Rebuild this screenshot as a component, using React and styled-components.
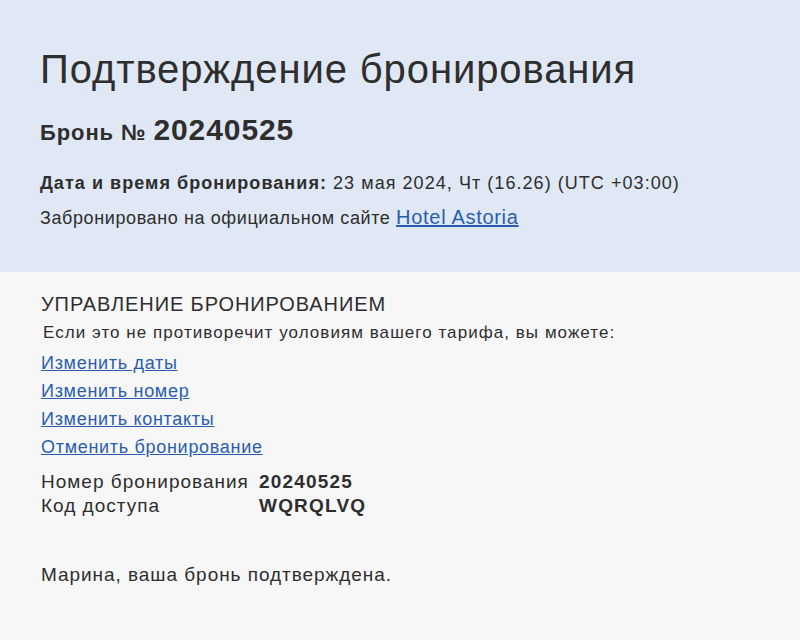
import React from "react";
import styled, { createGlobalStyle } from "styled-components";

const GlobalStyle = createGlobalStyle`
  html, body {
    margin: 0;
    padding: 0;
    background: #f7f7f8;
  }
  body {
    font-family: "Liberation Sans", Arial, sans-serif;
    color: #2e2e2e;
  }
`;

const Page = styled.div`
  width: 800px;
  min-height: 640px;
  background: #f7f7f8;
`;

const Header = styled.header`
  background: #dfe8f4;
  padding: 41px 40px 0;
  height: 272px;
  box-sizing: border-box;
`;

const Title = styled.h1`
  margin: 0;
  font-size: 40px;
  font-weight: normal;
  line-height: 56px;
  letter-spacing: 0.9px;
`;

const BookingNo = styled.h2`
  margin: 17px 0 0;
  font-size: 22px;
  font-weight: bold;
  line-height: 32px;
  letter-spacing: 0.9px;

  & > span {
    font-size: 30px;
  }
`;

const InfoLine = styled.p`
  margin: ${({ $first }) => ($first ? "21px" : "8px")} 0 0;
  font-size: 18px;
  line-height: 26px;
  letter-spacing: ${({ $first }) => ($first ? "1.05px" : "0.6px")};
`;

const Link = styled.a`
  color: #2a5db0;
  text-decoration: underline;
  font-size: ${({ $big }) => ($big ? "20px" : "18px")};
  letter-spacing: 0.7px;
`;

const Body = styled.main`
  padding: 19px 41px 40px;
`;

const SectionTitle = styled.h3`
  margin: 0;
  font-size: 20px;
  font-weight: normal;
  line-height: 26px;
  letter-spacing: 0.9px;
  text-transform: uppercase;
`;

const Note = styled.p`
  margin: 4px 0 0 2px;
  font-size: 17px;
  line-height: 24px;
  letter-spacing: 1.05px;
`;

const Actions = styled.ul`
  list-style: none;
  margin: 6px 0 0;
  padding: 0;
  display: flex;
  flex-direction: column;
  gap: 4px;

  & > li {
    font-size: 18px;
    line-height: 24px;
  }
`;

const Details = styled.dl`
  margin: 11px 0 0;
  display: grid;
  grid-template-columns: 218px auto;
  font-size: 19px;
  line-height: 24px;
  letter-spacing: 1px;

  & > dt,
  & > dd {
    margin: 0;
  }

  & > dd {
    font-weight: bold;
    letter-spacing: 1.2px;
  }
`;

const Greeting = styled.p`
  margin: 45px 0 0;
  font-size: 19px;
  line-height: 24px;
  letter-spacing: 0.95px;
`;

const actions = [
  "Изменить даты",
  "Изменить номер",
  "Изменить контакты",
  "Отменить бронирование",
];

export default function App() {
  return (
    <Page>
      <GlobalStyle />
      <Header>
        <Title>Подтверждение бронирования</Title>
        <BookingNo>
          Бронь № <span>20240525</span>
        </BookingNo>
        <InfoLine $first>
          <b>Дата и время бронирования:</b> 23 мая 2024, Чт (16.26) (UTC +03:00)
        </InfoLine>
        <InfoLine>
          Забронировано на официальном сайте{" "}
          <Link href="#" $big>
            Hotel Astoria
          </Link>
        </InfoLine>
      </Header>
      <Body>
        <SectionTitle>Управление бронированием</SectionTitle>
        <Note>Если это не противоречит уоловиям вашего тарифа, вы можете:</Note>
        <Actions>
          {actions.map((a) => (
            <li key={a}>
              <Link href="#">{a}</Link>
            </li>
          ))}
        </Actions>
        <Details>
          <dt>Номер бронирования</dt>
          <dd>20240525</dd>
          <dt>Код доступа</dt>
          <dd>WQRQLVQ</dd>
        </Details>
        <Greeting>Марина, ваша бронь подтверждена.</Greeting>
      </Body>
    </Page>
  );
}
